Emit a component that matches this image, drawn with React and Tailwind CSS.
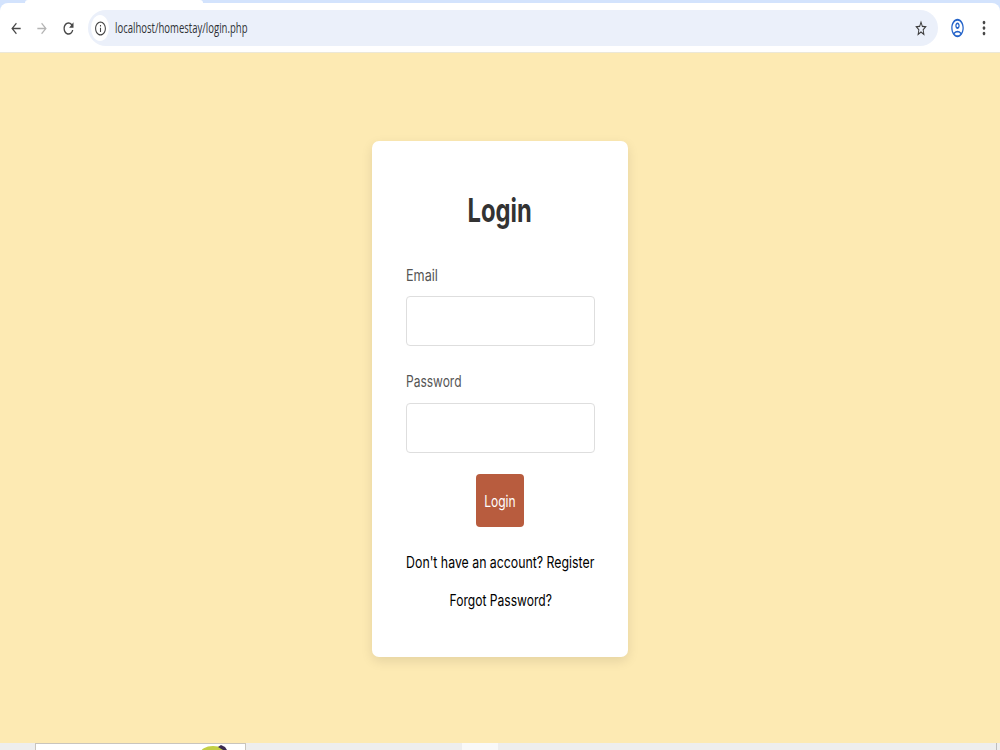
import React, { useState } from "react";
import {
  MdArrowBack,
  MdArrowForward,
  MdInfoOutline,
  MdMoreVert,
  MdOutlineAccountCircle,
  MdRefresh,
  MdStarBorder,
} from "react-icons/md";

function BrowserBar() {
  return (
    <header className="h-[53px] shrink-0 bg-[#d3e3fd] border-b border-[#ece8d8] flex flex-col">
      <div className="h-[3px] pl-[25px]">
        <div className="w-[178px] h-full bg-white rounded-t-sm" />
      </div>
      <div className="flex-1 bg-white rounded-t-lg flex items-center pt-px">
        <div className="w-[88px] flex items-center pl-[9px]">
          <MdArrowBack preserveAspectRatio="none" className="w-[14px] h-[17px] text-[#474747]" />
          <MdArrowForward preserveAspectRatio="none" className="w-[14px] h-[17px] ml-[12px] text-[#b4b4b4]" />
          <MdRefresh preserveAspectRatio="none" className="w-[15px] h-[19px] ml-[12px] text-[#474747]" />
        </div>
        <div className="w-[850px] h-[36px] rounded-[18px] bg-[#ebf0fa] flex items-center pl-[3px] pr-[10px]">
          <div className="w-[18px] h-[26px] rounded-[50%] bg-white flex items-center justify-center">
            <MdInfoOutline preserveAspectRatio="none" className="w-[13px] h-[17px] text-[#474747]" />
          </div>
          <div className="ml-[6px] font-['Open_Sans',sans-serif] text-[14px] leading-5 text-[#303236] whitespace-nowrap origin-left scale-x-[0.682]">
            localhost/homestay/login.php
          </div>
          <MdStarBorder preserveAspectRatio="none" className="w-[14px] h-[19px] ml-auto text-[#3c3c3c]" />
        </div>
        <MdOutlineAccountCircle preserveAspectRatio="none" className="w-[15px] h-[22px] ml-[12px] text-[#2463c9]" />
        <MdMoreVert preserveAspectRatio="none" className="w-[16px] h-[22px] ml-[11px] text-[#474747]" />
      </div>
    </header>
  );
}

function Field({ label, type, value, onChange, labelClass }) {
  return (
    <label className="block h-[106.5px]">
      <span className={`block w-max h-[33.5px] leading-6 text-[#555] origin-left ${labelClass}`}>
        {label}
      </span>
      <input
        type={type}
        value={value}
        onChange={(e) => onChange(e.target.value)}
        className="block w-[189px] h-[50px] px-2 border border-[#dedede] rounded-[4px] outline-none"
      />
    </label>
  );
}

function LoginCard() {
  const [email, setEmail] = useState("");
  const [password, setPassword] = useState("");

  return (
    <form
      onSubmit={(e) => e.preventDefault()}
      className="w-[256px] h-[515.5px] mt-[88px] px-[34px] pt-[43.5px] bg-white rounded-[7px] shadow-[0_4px_12px_rgba(0,0,0,0.1)] flex flex-col"
    >
      <h2 className="h-[78px] flex justify-center text-[33px] leading-[50px] font-bold text-[#333]">
        <span className="scale-x-[0.72]">Login</span>
      </h2>
      <Field label="Email" type="email" value={email} onChange={setEmail} labelClass="scale-x-[0.79]" />
      <Field label="Password" type="password" value={password} onChange={setPassword} labelClass="scale-x-[0.75]" />
      <button
        type="submit"
        className="w-[48px] h-[53px] self-center -mt-[1.5px] rounded-[4px] bg-[#b85c3e] text-white flex items-center justify-center"
      >
        <span className="scale-x-[0.75]">Login</span>
      </button>
      <p className="mt-[23px] h-[38px] pl-px flex justify-center leading-6 text-black whitespace-nowrap">
        <a href="#register" className="scale-x-[0.77]">Don't have an account? Register</a>
      </p>
      <p className="pl-px flex justify-center leading-6 text-black whitespace-nowrap">
        <a href="#forgot" className="scale-x-[0.755]">Forgot Password?</a>
      </p>
    </form>
  );
}

function BottomStrip() {
  return (
    <footer className="h-[7px] shrink-0 bg-[#eeeeee] flex overflow-hidden">
      <div className="w-[211px] ml-[35px] bg-white border border-b-0 border-[#c9c5bd] flex">
        <svg viewBox="0 0 30 6" className="w-[30px] h-[6px] ml-[163px]">
          <ellipse cx="14" cy="10" rx="13" ry="8" fill="#c3cf45" />
          <path d="M19 3 L22 1 L26 3 L28 6 L24 6 Z" fill="#3b2a50" />
        </svg>
      </div>
      <div className="w-[36px] ml-[216px] bg-[#f9f9f9]" />
      <div className="w-px ml-auto mr-[3px] bg-[#bdbdbd]" />
    </footer>
  );
}

export default function App() {
  return (
    <div className="w-[1000px] h-[750px] flex flex-col overflow-hidden font-['Inter',sans-serif] text-[16px]">
      <BrowserBar />
      <main className="flex-1 bg-[#fdeab3] flex justify-center items-start">
        <LoginCard />
      </main>
      <BottomStrip />
    </div>
  );
}
